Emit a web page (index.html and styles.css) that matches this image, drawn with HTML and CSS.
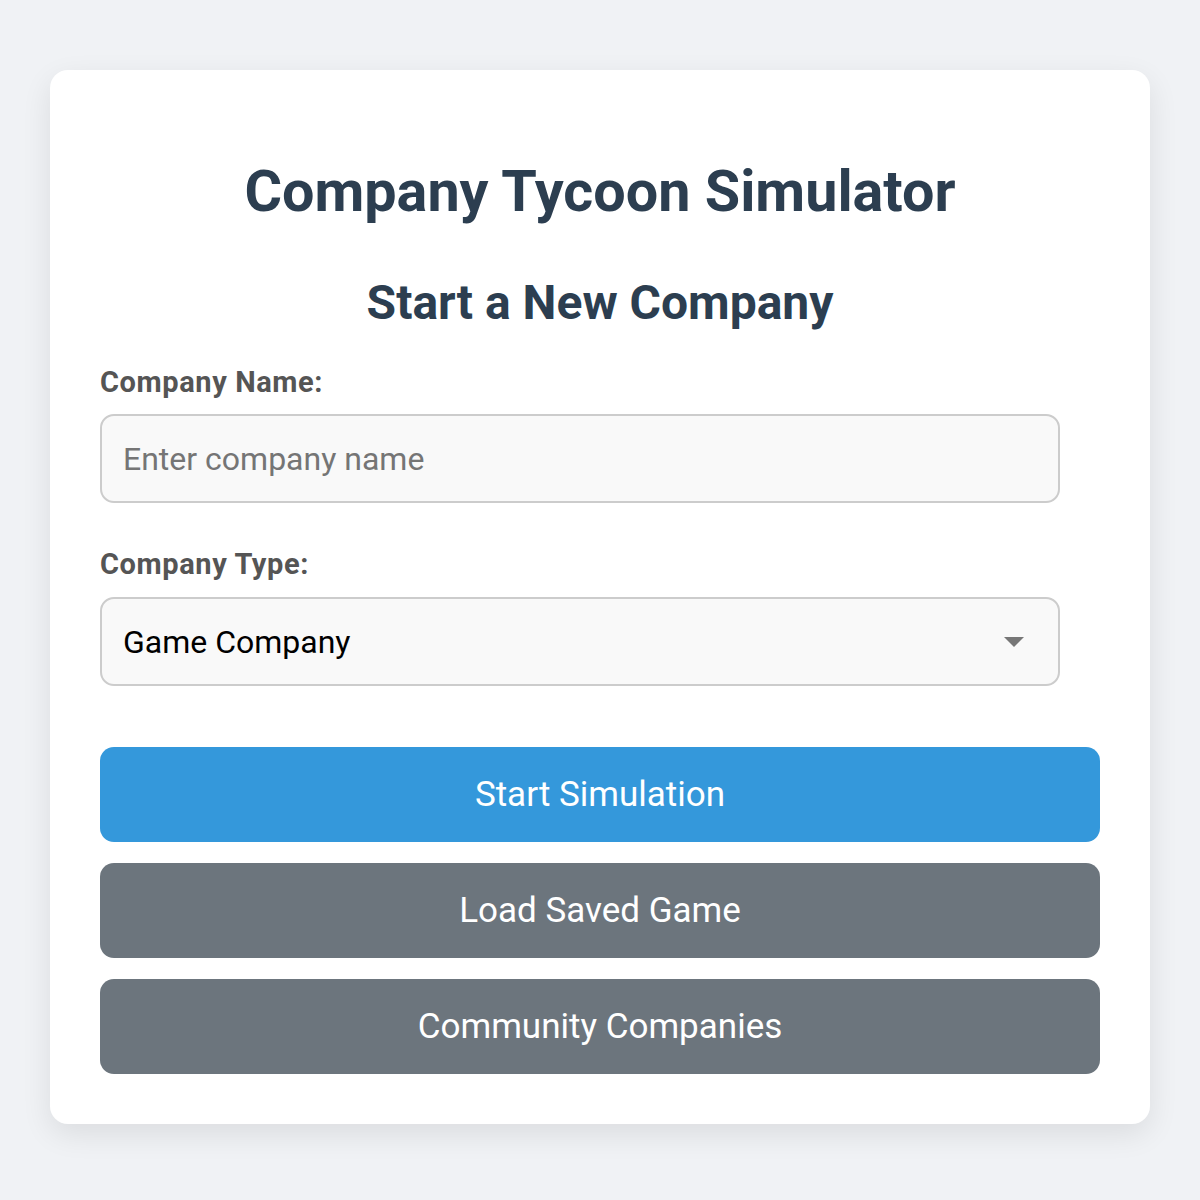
FILE: index.html
```html
<!DOCTYPE html>
<html lang="en">
<head>
<meta charset="utf-8">
<title>Company Tycoon Simulator</title>
<link rel="stylesheet" href="styles.css">
</head>
<body>
<div class="card">
  <h1 class="title">Company Tycoon Simulator</h1>
  <h2 class="subtitle">Start a New Company</h2>
  <label class="label" for="name">Company Name:</label>
  <input class="field" id="name" type="text" placeholder="Enter company name">
  <label class="label label-second" for="type">Company Type:</label>
  <div class="select-wrap">
    <select class="field select" id="type">
      <option>Game Company</option>
      <option>Tech Company</option>
      <option>Food Company</option>
    </select>
    <svg class="arrow" width="20" height="10" viewBox="0 0 20 10"><path d="M0 0 H20 L10 10 Z" fill="#777"/></svg>
  </div>
  <div class="actions">
    <button class="btn btn-primary">Start Simulation</button>
    <button class="btn btn-secondary">Load Saved Game</button>
    <button class="btn btn-secondary">Community Companies</button>
  </div>
</div>
</body>
</html>
```
FILE: styles.css
```css
html, body {
  margin: 0;
  padding: 0;
}
body {
  background: #f0f2f5;
  font-family: Roboto, "Liberation Sans", Arial, sans-serif;
  padding: 70px 50px 76px;
}
.card {
  background: #ffffff;
  border-radius: 18px;
  box-shadow: 0 10px 30px rgba(0, 0, 0, 0.09);
  padding: 50px;
  display: flex;
  flex-direction: column;
}
.title {
  margin: 37px 0 0;
  font-size: 57.5px;
  line-height: 70px;
  font-weight: 700;
  color: #2c3e50;
  text-align: center;
}
.subtitle {
  margin: 48px 0 0;
  font-size: 48px;
  line-height: 56px;
  font-weight: 700;
  color: #2c3e50;
  text-align: center;
}
.label {
  display: block;
  margin-top: 35px;
  font-size: 29px;
  line-height: 32px;
  letter-spacing: 0.6px;
  font-weight: 700;
  color: #555555;
}
.label-second {
  margin-top: 45px;
}
.field {
  display: block;
  box-sizing: border-box;
  width: 960px;
  height: 89px;
  margin-top: 16px;
  padding: 0 21px;
  border: 2px solid #cccccc;
  border-radius: 14px;
  background: #f9f9f9;
  font-family: Roboto, "Liberation Sans", Arial, sans-serif;
  font-size: 32px;
  color: #000000;
  outline: none;
}
.field::placeholder {
  color: #757575;
}
.select-wrap {
  position: relative;
  width: 960px;
  margin-top: 17px;
}
.select {
  margin-top: 0;
  appearance: none;
  -webkit-appearance: none;
}
.arrow {
  position: absolute;
  left: 904px;
  top: 40px;
  pointer-events: none;
}
.actions {
  display: flex;
  flex-direction: column;
  gap: 21px;
  margin-top: 61px;
}
.btn {
  height: 95px;
  border: none;
  border-radius: 14px;
  color: #ffffff;
  font-family: Roboto, "Liberation Sans", Arial, sans-serif;
  font-size: 35px;
  font-weight: 400;
  cursor: pointer;
}
.btn-primary {
  background: #3498db;
}
.btn-secondary {
  background: #6c757d;
}
```
